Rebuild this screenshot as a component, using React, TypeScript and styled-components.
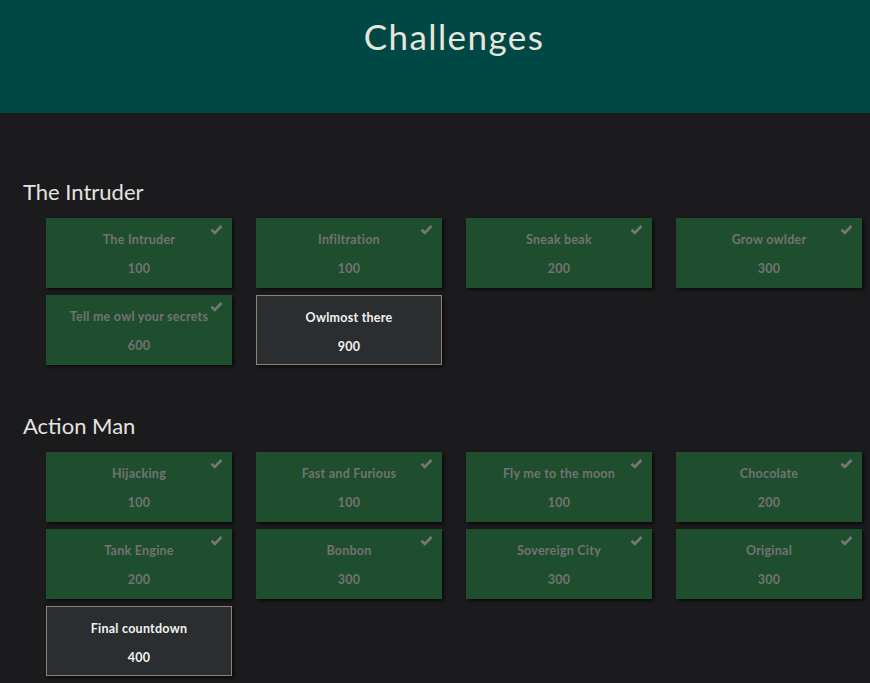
import React from "react";
import styled, { createGlobalStyle } from "styled-components";

const Global = createGlobalStyle`
  html, body { margin: 0; padding: 0; background: #1b1b1d; }
  body { font-family: "Lato", "Open Sans", sans-serif; }
`;

const Page = styled.div`
  min-height: 683px;
  background: #1b1b1d;
`;

const Header = styled.header`
  height: 113px;
  background: #004845;
  display: flex;
  justify-content: center;
  align-items: flex-start;
`;

const Title = styled.h1`
  margin: 16px 0 0 0;
  font-family: "Lato", sans-serif;
  font-weight: 400;
  font-size: 35px;
  line-height: 40px;
  color: #e6e6dc;
  letter-spacing: 1.4px;
  padding-left: 38px;
`;

const Main = styled.main`
  padding: 66px 8px 0 23px;
  display: flex;
  flex-direction: column;
  gap: 48px;
`;

const Section = styled.section`
  display: flex;
  flex-direction: column;
  gap: 13px;
`;

const Category = styled.h3`
  margin: 0;
  font-family: "Lato", sans-serif;
  font-weight: 400;
  font-size: 22px;
  line-height: 26px;
  color: #e4e4e0;
`;

const Grid = styled.div`
  display: grid;
  grid-template-columns: repeat(4, 186px);
  column-gap: 24px;
  row-gap: 7px;
  margin-left: 23px;
`;

const Card = styled.div<{ $solved: boolean }>`
  position: relative;
  box-sizing: border-box;
  height: 70px;
  background: ${(p) => (p.$solved ? "#1e4e2d" : "#2b2e31")};
  border: ${(p) => (p.$solved ? "none" : "1px solid #8c8374")};
  box-shadow: 2px 2px 3px rgba(0, 0, 0, 0.6);
  color: ${(p) => (p.$solved ? "#737373" : "#f2f2f2")};
  font-family: "Lato", sans-serif;
  font-weight: 700;
  font-size: 12.5px;
  letter-spacing: 0.25px;
  display: flex;
  flex-direction: column;
  align-items: center;
  padding-top: 14px;
`;

const Name = styled.div`
  line-height: 16px;
`;

const Value = styled.div`
  margin-top: 13px;
  line-height: 16px;
`;

const Check = styled.svg`
  position: absolute;
  top: 6px;
  right: 9px;
  width: 13px;
  height: 11px;
`;

type Ch = { name: string; value: number; solved: boolean };

const sections: { title: string; items: Ch[] }[] = [
  {
    title: "The Intruder",
    items: [
      { name: "The Intruder", value: 100, solved: true },
      { name: "Infiltration", value: 100, solved: true },
      { name: "Sneak beak", value: 200, solved: true },
      { name: "Grow owlder", value: 300, solved: true },
      { name: "Tell me owl your secrets", value: 600, solved: true },
      { name: "Owlmost there", value: 900, solved: false },
    ],
  },
  {
    title: "Action Man",
    items: [
      { name: "Hijacking", value: 100, solved: true },
      { name: "Fast and Furious", value: 100, solved: true },
      { name: "Fly me to the moon", value: 100, solved: true },
      { name: "Chocolate", value: 200, solved: true },
      { name: "Tank Engine", value: 200, solved: true },
      { name: "Bonbon", value: 300, solved: true },
      { name: "Sovereign City", value: 300, solved: true },
      { name: "Original", value: 300, solved: true },
      { name: "Final countdown", value: 400, solved: false },
    ],
  },
];

const CheckIcon = () => (
  <Check viewBox="0 0 13 11">
    <path d="M1.5 5.8 L4.8 9 L11.5 2" fill="none" stroke="#777" strokeWidth="2.6" strokeLinecap="butt" strokeLinejoin="miter" />
  </Check>
);

export default function App() {
  return (
    <Page>
      <Global />
      <Header>
        <Title>Challenges</Title>
      </Header>
      <Main>
        {sections.map((s) => (
          <Section key={s.title}>
            <Category>{s.title}</Category>
            <Grid>
              {s.items.map((c) => (
                <Card key={c.name} $solved={c.solved}>
                  {c.solved && <CheckIcon />}
                  <Name>{c.name}</Name>
                  <Value>{c.value}</Value>
                </Card>
              ))}
            </Grid>
          </Section>
        ))}
      </Main>
    </Page>
  );
}
